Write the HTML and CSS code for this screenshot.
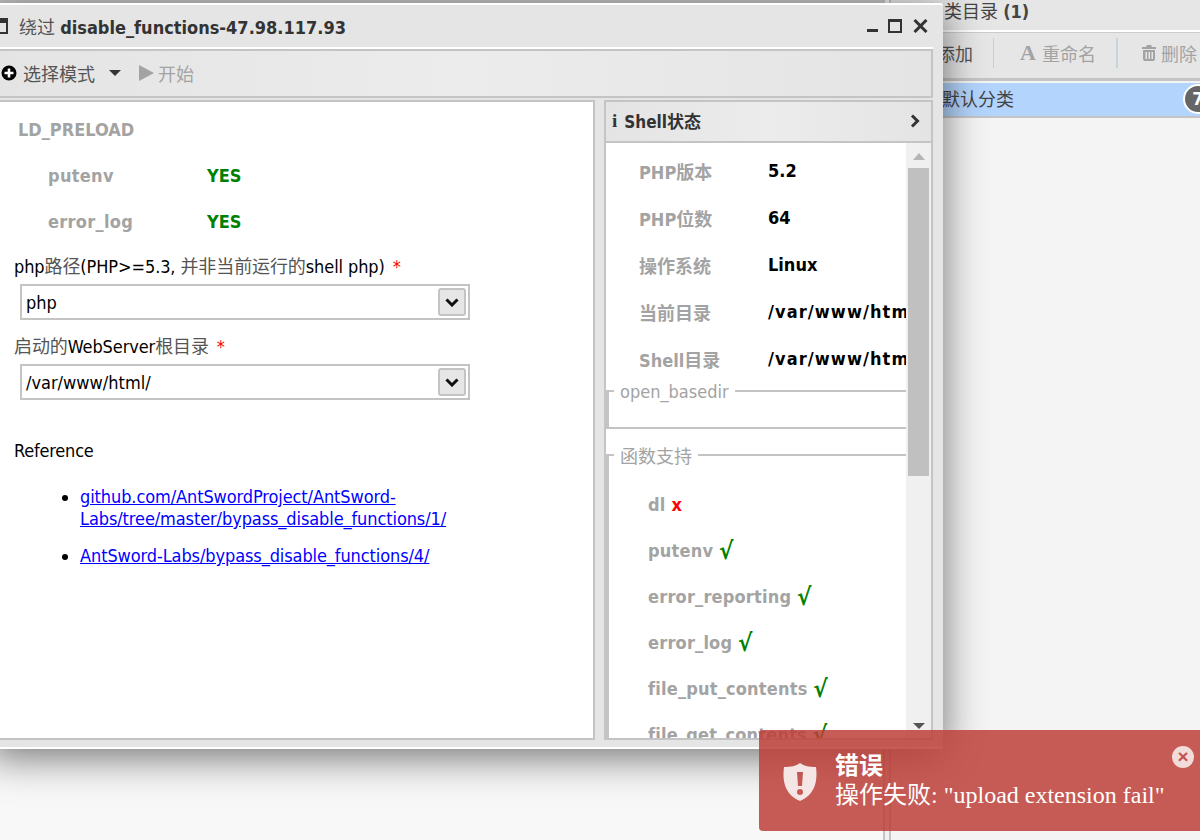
FILE: index.html
```html
<!DOCTYPE html>
<html lang="en">
<head>
    <meta charset="UTF-8">
    <title>AntSword</title>
    <link rel="stylesheet" href="styles.css">
</head>
<body>
    <div class="desktop">
        <div class="left-pane"></div>
        <div class="splitter"></div>
        <div class="right-pane">
            <div class="cat-title">分类目录 <b>(1)</b></div>
            <div class="cat-toolbar">
                <span class="cat-btn cat-add">添加</span>
                <span class="cat-btn cat-rename"><span class="font-a">A</span>重命名</span>
                <span class="cat-btn cat-del">
                    <svg width="14" height="16" viewBox="0 0 14 16"><path fill="#a3a3a3" d="M5 0h4l1 2h4v2H0V2h4zM1 5h12v9a2 2 0 0 1-2 2H3a2 2 0 0 1-2-2zm2.500 2v7h1.500V7zm3 0v7h1.500V7zm3 0v7H11V7z"/></svg>
                    删除
                </span>
            </div>
            <div class="cat-item">默认分类<span class="cat-badge">7</span></div>
        </div>
    </div>

    <div class="window">
        <div class="win-title">
            <svg class="win-icon" width="18" height="18" viewBox="0 0 18 18"><path fill="#333" d="M1 1h16v16H1zm2 5v9h12V6z"/></svg>
            <span class="win-name"><span class="cjk">绕过</span> <b>disable_functions-47.98.117.93</b></span>
            <span class="win-controls">
                <svg width="11" height="14" viewBox="0 0 11 14"><path fill="#333" d="M0 10h11v3H0z"/></svg>
                <svg width="15" height="14" viewBox="0 0 15 14"><path fill="#333" d="M0 0h14v14H0zm2 3v9h10V3z"/></svg>
                <svg width="15" height="14" viewBox="0 0 15 14"><path stroke="#333" stroke-width="3" d="M1.500 1l12 12M13.500 1l-12 12"/></svg>
            </span>
        </div>
        <div class="win-toolbar">
            <svg width="16" height="16" viewBox="0 0 16 16"><circle cx="8" cy="8" r="7.500" fill="#000"/><path fill="#fff" d="M6.700 3.500h2.600v3.200h3.200v2.600H9.300v3.200H6.700V9.300H3.500V6.700h3.200z"/></svg>
            <span class="tool-text">选择模式</span>
            <svg class="tool-caret" width="12" height="6" viewBox="0 0 12 6"><path fill="#333" d="M0 0h12L6 6z"/></svg>
            <svg class="tool-play" width="15" height="16" viewBox="0 0 15 16"><path fill="#a3a3a3" d="M0 0l15 8-15 8z"/></svg>
            <span class="tool-text tool-off">开始</span>
        </div>
        <div class="win-body">
            <div class="main-panel">
                <div class="ld-title">LD_PRELOAD</div>
                <div class="ld-row"><span class="ld-name">putenv</span><span class="yes">YES</span></div>
                <div class="ld-row"><span class="ld-name">error_log</span><span class="yes">YES</span></div>

                <div class="field-label">php<span class="cjk">路径</span>(PHP&gt;=5.3, <span class="cjk">并非当前运行的</span>shell php)<span class="req">*</span></div>
                <div class="combo">
                    <span>php</span>
                    <span class="combo-btn"><svg width="14" height="9" viewBox="0 0 14 9"><path fill="none" stroke="#111" stroke-width="3" d="M1.500 1.500L7 7l5.500-5.500"/></svg></span>
                </div>
                <div class="field-label"><span class="cjk">启动的</span>WebServer<span class="cjk">根目录</span><span class="req">*</span></div>
                <div class="combo">
                    <span>/var/www/html/</span>
                    <span class="combo-btn"><svg width="14" height="9" viewBox="0 0 14 9"><path fill="none" stroke="#111" stroke-width="3" d="M1.500 1.500L7 7l5.500-5.500"/></svg></span>
                </div>

                <div class="ref-title">Reference</div>
                <ul class="ref-list">
                    <li><a href="#">github.com/AntSwordProject/AntSword-Labs/tree/master/bypass_disable_functions/1/</a></li>
                    <li><a href="#">AntSword-Labs/bypass_disable_functions/4/</a></li>
                </ul>
            </div>

            <div class="side-panel">
                <div class="side-head">
                    <span class="info-i">i</span>
                    <b>Shell状态</b>
                    <svg class="side-arrow" width="10" height="14" viewBox="0 0 10 14"><path fill="none" stroke="#333" stroke-width="3" d="M2 1.500L7.500 7 2 12.500"/></svg>
                </div>
                <div class="side-scroll">
                    <div class="side-content">
                        <div class="stat-row"><span class="stat-name">PHP版本</span><span class="stat-val">5.2</span></div>
                        <div class="stat-row"><span class="stat-name">PHP位数</span><span class="stat-val">64</span></div>
                        <div class="stat-row"><span class="stat-name">操作系统</span><span class="stat-val">Linux</span></div>
                        <div class="stat-row"><span class="stat-name">当前目录</span><span class="stat-val stat-path">/var/www/html/</span></div>
                        <div class="stat-row"><span class="stat-name">Shell目录</span><span class="stat-val stat-path">/var/www/html/</span></div>

                        <div class="group group-basedir">
                            <div class="group-legend"><span>open_basedir</span></div>
                        </div>
                        <div class="group">
                            <div class="group-legend"><span>函数支持</span></div>
                            <div class="fn-row">dl <span class="no">x</span></div>
                            <div class="fn-row">putenv <span class="ok">√</span></div>
                            <div class="fn-row">error_reporting <span class="ok">√</span></div>
                            <div class="fn-row">error_log <span class="ok">√</span></div>
                            <div class="fn-row">file_put_contents <span class="ok">√</span></div>
                            <div class="fn-row">file_get_contents <span class="ok">√</span></div>
                        </div>
                    </div>
                    <div class="scrollbar">
                        <svg width="14" height="8" viewBox="0 0 14 8"><path fill="#b5b5b5" d="M7 0l6 7H1z"/></svg>
                        <div class="scroll-thumb"></div>
                        <svg class="scroll-down" width="14" height="8" viewBox="0 0 14 8"><path fill="#555" d="M1 1h12L7 7z"/></svg>
                    </div>
                </div>
            </div>
        </div>
    </div>

    <div class="toast">
        <svg class="toast-icon" width="36" height="38" viewBox="0 0 36 38"><path fill="#f5e6e5" fill-rule="evenodd" d="M18 0c4 3 9 4 16 4 2 16-2 28-16 34C4 32 0 20 2 4c7 0 12-1 16-4zm-3 9l1 14h4l1-14zm3 17a3 3 0 1 0 0 6 3 3 0 0 0 0-6z"/></svg>
        <div class="toast-text">
            <div class="toast-title">错误</div>
            <div>操作失败: "upload extension fail"</div>
        </div>
        <span class="toast-close">×</span>
    </div>
</body>
</html>
```

FILE: styles.css
```css
html, body {
    margin: 0;
    height: 100%;
}
body {
    width: 1200px;
    height: 840px;
    overflow: hidden;
    position: relative;
    background-color: #f4f4f4;
    font-family: "DejaVu Sans Condensed", "Liberation Sans", "Noto Sans CJK SC", sans-serif;
    color: #333;
}
.cjk {
    color: #555;
}

/* page behind the window */
.desktop {
    display: flex;
    height: 840px;
}
.left-pane {
    width: 883px;
    background-color: #f8f8f8;
    border-top: 3px solid #c4c4c4;
}
.splitter {
    width: 4px;
    background-color: #f0f0f0;
    border-left: 2px solid #c4c4c4;
    border-right: 2px solid #c4c4c4;
}
.right-pane {
    flex: 1;
    min-width: 0;
}
.cat-title {
    height: 30px;
    padding-left: 35px;
    line-height: 24px;
    font-size: 18px;
    background-color: #e6e6e6;
    border-bottom: 2px solid #fff;
    color: #444;
}
.cat-toolbar {
    height: 49px;
    box-sizing: border-box;
    display: flex;
    align-items: center;
    background-color: #e6e6e6;
    border-bottom: 3px solid #c4c4c4;
    border-top: 1px solid #ccc;
    font-size: 18px;
    color: #a3a3a3;
    padding-bottom: 5px;
}
.cat-btn {
    display: flex;
    align-items: center;
    height: 30px;
    white-space: nowrap;
}
.cat-add {
    padding-left: 46px;
    padding-right: 20px;
    color: #555;
    border-right: 1px solid #c5d0d5;
}
.cat-rename {
    padding: 0 20px 0 26px;
    border-right: 2px solid #c5d5de;
}
.font-a {
    font-family: "Liberation Serif", serif;
    font-weight: bold;
    font-size: 22px;
    margin-right: 6px;
}
.cat-del {
    padding-left: 24px;
    gap: 5px;
    flex-shrink: 0;
}
.cat-item {
    height: 33px;
    padding-left: 51px;
    line-height: 33px;
    font-size: 18px;
    color: #444;
    background-color: #b3d4fc;
    border-bottom: 2px solid #c4c4c4;
    position: relative;
    margin-top: 2px;
}
.cat-badge {
    position: absolute;
    left: 292px;
    top: 1px;
    width: 26px;
    height: 26px;
    line-height: 26px;
    border-radius: 50%;
    border: 2px solid #fff;
    background-color: #666;
    color: #fff;
    font-weight: bold;
    text-align: center;
}

/* dialog window, runs off the left edge */
.window {
    position: absolute;
    left: -12px;
    top: 3px;
    width: 955px;
    height: 746px;
    box-sizing: border-box;
    background-color: #e5e5e5;
    border-radius: 3px;
    box-shadow: 0 8px 40px rgba(0, 0, 0, 0.55);
    border-top: 2px solid #fff;
    border-bottom: 2px solid #fff;
    display: flex;
    flex-direction: column;
}
.win-title {
    height: 42px;
    box-sizing: border-box;
    flex-shrink: 0;
    display: flex;
    align-items: center;
    padding-left: 3px;
    padding-right: 15px;
    padding-bottom: 1px;
    font-size: 18px;
}
.win-icon {
    margin-right: 10px;
}
.win-name {
    flex: 1;
}
.win-controls {
    display: flex;
    align-items: center;
    gap: 10px;
}
.win-toolbar {
    height: 45px;
    margin: 2px 10px 2px 0;
    flex-shrink: 0;
    display: flex;
    align-items: center;
    padding-left: 11px;
    padding-bottom: 2px;
    box-sizing: border-box;
    height: 49px;
    background: linear-gradient(90deg, #e4e4e4, #ececec 50%, #e4e4e4);
    border: 2px solid #c4c4c4;
    box-shadow: 0 -2px 0 #fff;
}
.tool-text {
    font-size: 18px;
    margin-left: 6px;
    color: #555;
}
.tool-off {
    margin-left: 4px;
    color: #a3a3a3;
}
.tool-caret {
    margin-left: 14px;
    margin-right: 18px;
}
.win-body {
    flex: 1;
    min-height: 0;
    display: flex;
    gap: 9px;
    padding-right: 10px;
    padding-bottom: 7px;
}

/* left form */
.main-panel {
    width: 607px;
    box-sizing: border-box;
    background-color: #fff;
    border: 2px solid #c4c4c4;
    border-left: none;
    padding: 16px 0 0 26px;
    font-size: 18px;
    color: #000;
}
.ld-title {
    margin-left: 4px;
    font-weight: bold;
    color: #a3a3a3;
    line-height: 24px;
}
.ld-row {
    display: flex;
    margin: 22px 0 0 34px;
    line-height: 24px;
    font-weight: bold;
}
.ld-name {
    width: 159px;
    color: #a3a3a3;
    letter-spacing: 0.3px;
}
.yes {
    color: #008000;
}
.field-label {
    margin-top: 22px;
    line-height: 24px;
    letter-spacing: -0.1px;
}
.ld-row + .field-label {
    margin-top: 21px;
}
.combo + .field-label {
    margin-top: 15px;
}
.req {
    color: #ff0000;
    margin-left: 8px;
}
.combo {
    width: 450px;
    height: 36px;
    margin: 5px 0 0 6px;
    box-sizing: border-box;
    border: 2px solid #c4c4c4;
    display: flex;
    align-items: center;
    justify-content: space-between;
    padding: 0 2px 0 4px;
}
.combo-btn {
    width: 28px;
    height: 28px;
    box-sizing: border-box;
    display: flex;
    align-items: center;
    justify-content: center;
    background-color: #e6e6e6;
    border: 2px solid #c4c4c4;
    border-radius: 3px;
}
.ref-title {
    margin-top: 39px;
    line-height: 24px;
    letter-spacing: -0.2px;
}
.ref-list {
    margin: 23px 0 0;
    padding-left: 66px;
    width: 370px;
    line-height: 22px;
    letter-spacing: -0.1px;
}
.ref-list li {
    margin-bottom: 15px;
}
.ref-list a {
    color: #0000ff;
}

/* right status panel */
.side-panel {
    width: 329px;
    display: flex;
    flex-direction: column;
    min-height: 0;
    border: 2px solid #c4c4c4;
    box-sizing: border-box;
}
.side-head {
    height: 41px;
    flex-shrink: 0;
    box-sizing: border-box;
    display: flex;
    align-items: center;
    padding: 0 11px 2px 6px;
    background: linear-gradient(90deg, #e4e4e4, #ececec 50%, #e4e4e4);
    border-bottom: 2px solid #c4c4c4;
    font-size: 17px;
    color: #333;
}
.info-i {
    font-family: "Liberation Serif", serif;
    font-weight: bold;
    font-size: 19px;
    margin-right: 7px;
}
.side-head b {
    flex: 1;
}
.side-scroll {
    flex: 1;
    min-height: 0;
    display: flex;
    background-color: #fff;
    overflow: hidden;
}
.side-content {
    flex: 1;
    min-width: 0;
    overflow: hidden;
    font-size: 18px;
    font-weight: bold;
}
.stat-row {
    display: flex;
    height: 47px;
    align-items: center;
    white-space: nowrap;
    margin-left: 33px;
}
.stat-row:first-child {
    margin-top: 4px;
}
.stat-name {
    width: 129px;
    flex-shrink: 0;
    color: #a3a3a3;
}
.stat-val {
    color: #000;
}
.stat-path {
    letter-spacing: 1.1px;
}
/* left rule starts level with the legend line */
.group {
    padding-left: 3px;
    background: linear-gradient(#c4c4c4, #c4c4c4) no-repeat 0 12px / 3px 100%;
}
.group-legend {
    height: 24px;
    display: flex;
    align-items: center;
    font-size: 18px;
    font-weight: normal;
    color: #a3a3a3;
}
.group-legend::before {
    content: "";
    width: 8px;
    height: 2px;
    margin-left: -3px;
    background-color: #c4c4c4;
    margin-right: 6px;
}
.group-legend::after {
    content: "";
    flex: 1;
    height: 2px;
    background-color: #c4c4c4;
    margin-left: 6px;
}
.group-basedir {
    height: 48px;
    border-bottom: 2px solid #c4c4c4;
    margin-top: -3px;
    margin-bottom: 14px;
}
.fn-row {
    height: 46px;
    line-height: 46px;
    margin-left: 39px;
    color: #a3a3a3;
    white-space: nowrap;
    letter-spacing: 0.2px;
}
.group-legend + .fn-row {
    margin-top: 15px;
}
.no {
    color: #ff0000;
}
.ok {
    color: #008000;
    font-size: 24px;
    line-height: 20px;
    vertical-align: -2px;
}
.scrollbar {
    width: 25px;
    flex-shrink: 0;
    display: flex;
    flex-direction: column;
    align-items: center;
    padding: 10px 0 8px;
    box-sizing: border-box;
    background-color: #f0f0f0;
}
.scroll-thumb {
    width: 21px;
    height: 308px;
    margin-top: 7px;
    background-color: #c0c0c0;
}
.scroll-down {
    margin-top: auto;
}

/* error notification */
.toast {
    position: absolute;
    left: 759px;
    top: 730px;
    width: 460px;
    height: 101px;
    box-sizing: border-box;
    padding: 22px 0 0 23px;
    display: flex;
    border-radius: 4px;
    background-color: rgba(189, 62, 55, 0.85);
    color: #fff;
    font-family: "Liberation Serif", "Noto Sans CJK SC", serif;
    font-size: 24px;
    line-height: 29px;
}
.toast-icon {
    margin: 11px 17px 0 0;
}
.toast-title {
    font-weight: bold;
}
.toast-close {
    position: absolute;
    left: 413px;
    top: 16px;
    width: 22px;
    height: 22px;
    line-height: 21px;
    text-align: center;
    border-radius: 50%;
    background-color: #f2dcda;
    color: #c4524c;
    font-family: "Liberation Sans", sans-serif;
    font-weight: bold;
    font-size: 19px;
}
```
